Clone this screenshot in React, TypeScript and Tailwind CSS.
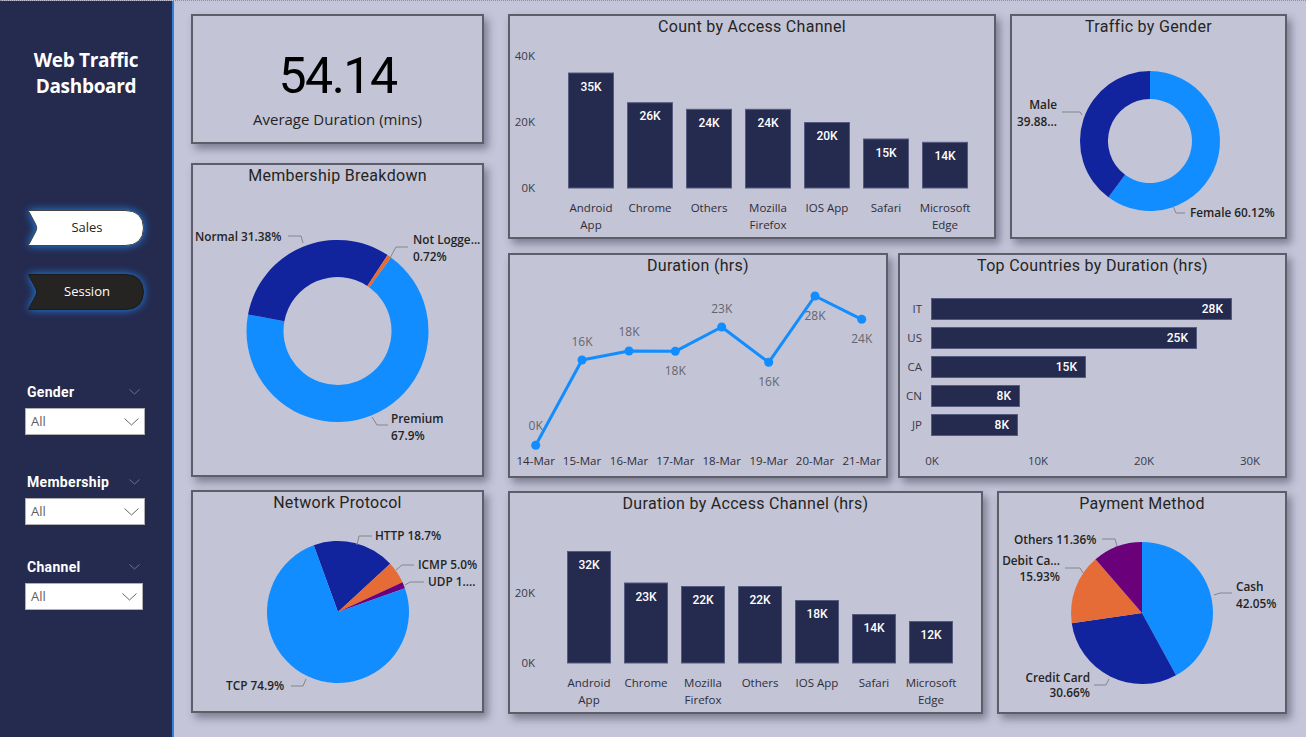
import React from "react";

type Part = { v: number; c: string };

const LIGHT = "#118dff";
const DARK = "#12239e";
const ORANGE = "#e66c37";
const PURPLE = "#6b007b";
const NAVY = "#252a4f";

const pt = (cx: number, cy: number, r: number, a: number) => [
  cx + r * Math.sin((a * Math.PI) / 180),
  cy - r * Math.cos((a * Math.PI) / 180),
];

function slicePath(cx: number, cy: number, r: number, ri: number, a0: number, a1: number) {
  const large = a1 - a0 > 180 ? 1 : 0;
  const [x0, y0] = pt(cx, cy, r, a0);
  const [x1, y1] = pt(cx, cy, r, a1);
  if (ri === 0) return `M${cx},${cy} L${x0},${y0} A${r},${r} 0 ${large} 1 ${x1},${y1} Z`;
  const [x2, y2] = pt(cx, cy, ri, a1);
  const [x3, y3] = pt(cx, cy, ri, a0);
  return `M${x0},${y0} A${r},${r} 0 ${large} 1 ${x1},${y1} L${x2},${y2} A${ri},${ri} 0 ${large} 0 ${x3},${y3} Z`;
}

function Pie({ cx, cy, r, ri = 0, start, parts }: { cx: number; cy: number; r: number; ri?: number; start: number; parts: Part[] }) {
  let a = start;
  return (
    <g>
      {parts.map((p, i) => {
        const a0 = a;
        a += p.v * 3.6;
        return <path key={i} d={slicePath(cx, cy, r, ri, a0, a)} fill={p.c} />;
      })}
    </g>
  );
}

// leader line + label for pies
function Leader({ pts }: { pts: string }) {
  return <polyline points={pts} fill="none" stroke="#85858f" strokeWidth={1} />;
}

function Lbl({ x, y, children, anchor = "start" }: { x: number; y: number; children: React.ReactNode; anchor?: "start" | "end" | "middle" }) {
  return (
    <text x={x} y={y} textAnchor={anchor} fontFamily="Open Sans, sans-serif" fontSize={11.8} fontWeight={600} fill="#252423">
      {children}
    </text>
  );
}

function AxisText({ x, y, children, anchor = "middle", fill = "#2e2e3a" }: { x: number; y: number; children: React.ReactNode; anchor?: "start" | "end" | "middle"; fill?: string }) {
  return (
    <text x={x} y={y} textAnchor={anchor} fontFamily="Open Sans, sans-serif" fontSize={11.5} fill={fill}>
      {children}
    </text>
  );
}

function Card({ className, w, h, title, children }: { className: string; w: number; h: number; title: string; children: React.ReactNode }) {
  return (
    <div className={`${className} shrink-0 flex flex-col border-2 border-[#5e5e6a] bg-[#c3c4d6] shadow-[4px_5px_8px_rgba(40,40,60,0.45)]`}>
      <div className="h-[21px] pt-[1px] text-center text-[16px] leading-[20px] text-[#252423] font-['Roboto',sans-serif] tracking-[0.3px]">
        {title}
      </div>
      <svg width={w - 4} height={h - 25} viewBox={`2 23 ${w - 4} ${h - 25}`} className="block overflow-visible">
        {children}
      </svg>
    </div>
  );
}

function ColumnChart({ x0, step, bw, base, scale, values, names, ticks, l1, l2 }: {
  x0: number; step: number; bw: number; base: number; scale: number; values: number[]; names: string[][]; ticks: number[]; l1: number; l2: number;
}) {
  return (
    <g>
      {ticks.map((t) => (
        <AxisText key={t} x={27} y={base - t * scale + 4} anchor="end" fill="#3a3a48">
          {t}K
        </AxisText>
      ))}
      {values.map((v, i) => {
        const x = x0 + i * step;
        const top = base - v * scale;
        return (
          <g key={i}>
            <rect x={x + 0.5} y={top + 0.5} width={bw - 1} height={v * scale - 0.5} fill={NAVY} stroke="#555a80" strokeWidth={1} />
            <text x={x + bw / 2} y={top + 18} textAnchor="middle" fontFamily="Roboto, sans-serif" fontSize={12} fontWeight={500} fill="#ffffff">
              {v}K
            </text>
            <AxisText x={x + bw / 2} y={l1}>{names[i][0]}</AxisText>
            {names[i][1] && <AxisText x={x + bw / 2} y={l2}>{names[i][1]}</AxisText>}
          </g>
        );
      })}
    </g>
  );
}

function SideButton({ label, dark }: { label: string; dark?: boolean }) {
  return (
    <div className="relative ml-[27px] h-[38px] w-[118px]">
      <svg width={118} height={38} viewBox="0 0 118 38" className="block overflow-visible drop-shadow-[0_0_4px_rgba(30,144,255,0.9)]">
        <path
          d="M2,1.5 H98 Q116,1.5 116.5,19 Q116,36.5 98,36.5 H2 Q1,36 3,33.5 L9,22 Q10.5,19 9,16 L3,4.5 Q1,2 2,1.5 Z"
          fill={dark ? "#252423" : "#ffffff"}
          stroke={dark ? "#1a1a1a" : "#444444"}
          strokeWidth={1}
        />
      </svg>
      <span
        className={`absolute inset-0 flex items-center justify-center pl-[2px] text-[13px] font-['Open_Sans',sans-serif] ${dark ? "text-white" : "text-[#252423]"}`}
      >
        {label}
      </span>
    </div>
  );
}

function Slicer({ label, mt, boxW }: { label: string; mt: string; boxW: string }) {
  return (
    <div className={`${mt} flex flex-col`}>
      <div className="flex h-[18px] items-center justify-between pl-[27px] pr-[32px]">
        <span className="text-[14px] font-bold text-white font-['Roboto',sans-serif] tracking-[0.3px]">{label}</span>
        <svg width={11} height={6} viewBox="0 0 11 6">
          <polyline points="0.5,0.5 5.5,5 10.5,0.5" fill="none" stroke="#6e7190" strokeWidth={1} />
        </svg>
      </div>
      <div className={`${boxW} ml-[25px] mt-[7px] flex h-[27px] items-center justify-between border border-[#b0b0b0] bg-white pl-[5px] pr-[5px]`}>
        <span className="text-[13px] text-[#605e5c] font-['Open_Sans',sans-serif]">All</span>
        <svg width={15} height={8} viewBox="0 0 15 8">
          <polyline points="0.5,0.5 7.5,7 14.5,0.5" fill="none" stroke="#666" strokeWidth={1} />
        </svg>
      </div>
    </div>
  );
}

const channelNames = [["Android", "App"], ["Chrome"], ["Others"], ["Mozilla", "Firefox"], ["IOS App"], ["Safari"], ["Microsoft", "Edge"]];
const durationNames = [["Android", "App"], ["Chrome"], ["Mozilla", "Firefox"], ["Others"], ["IOS App"], ["Safari"], ["Microsoft", "Edge"]];

const linePts = [
  { x: 27.7, y: 192.3, d: "14-Mar", l: "0K", ly: 173 },
  { x: 74, y: 107, d: "15-Mar", l: "16K", ly: 89 },
  { x: 121, y: 98, d: "16-Mar", l: "18K", ly: 79 },
  { x: 167.3, y: 98.3, d: "17-Mar", l: "18K", ly: 118 },
  { x: 213.7, y: 74, d: "18-Mar", l: "23K", ly: 56 },
  { x: 260.7, y: 109.3, d: "19-Mar", l: "16K", ly: 129 },
  { x: 307, y: 43, d: "20-Mar", l: "28K", ly: 63 },
  { x: 353.7, y: 66.3, d: "21-Mar", l: "24K", ly: 86 },
];

const countries = [
  { c: "IT", w: 301, v: "28K" },
  { c: "US", w: 266, v: "25K" },
  { c: "CA", w: 155, v: "15K" },
  { c: "CN", w: 89, v: "8K" },
  { c: "JP", w: 87, v: "8K" },
];

export default function App() {
  return (
    <div className="flex h-[737px] w-[1306px] overflow-hidden border-t border-dotted border-[#8e8e9c] bg-[#c4c5d8]">
      {/* Sidebar */}
      <aside className="flex w-[174px] shrink-0 flex-col border-r-2 border-[#2f80d8] bg-[#252a4f]">
        <h1 className="pt-[46px] text-center text-[19px] font-bold leading-[26px] text-white font-['Open_Sans',sans-serif] tracking-[-0.3px]">
          Web Traffic
          <br />
          Dashboard
        </h1>
        <div className="mt-[110px] flex flex-col gap-[26px]">
          <SideButton label="Sales" />
          <SideButton label="Session" dark />
        </div>
        <Slicer label="Gender" mt="mt-[72px]" boxW="w-[120px]" />
        <Slicer label="Membership" mt="mt-[38px]" boxW="w-[120px]" />
        <Slicer label="Channel" mt="mt-[33px]" boxW="w-[118px]" />
      </aside>

      {/* Canvas */}
      <main className="flex gap-[24px] pl-[17px] pt-[12px]">
        <div className="flex w-[293px] flex-col">
          <div className="mt-[1px] flex h-[130px] w-[293px] flex-col items-center border-2 border-[#5e5e6a] bg-[#c3c4d6] shadow-[4px_5px_8px_rgba(40,40,60,0.45)]">
            <div className="mt-[33px] text-[50px] leading-[54px] text-black font-['Roboto',sans-serif] tracking-[-1.5px]">54.14</div>
            <div className="mt-[5px] text-[15px] text-[#252423] font-['Open_Sans',sans-serif]">Average Duration (mins)</div>
          </div>

          <div className="mt-[19px]">
            <Card className="w-[293px] h-[314px]" w={293} h={314} title="Membership Breakdown">
              <Pie cx={146.5} cy={168} r={91} ri={54} start={36} parts={[{ v: 67.9, c: LIGHT }, { v: 31.38, c: DARK }, { v: 0.72, c: ORANGE }]} />
              <Leader pts="97,73 110,73 112,80" />
              <Lbl x={4} y={78}>Normal 31.38%</Lbl>
              <Leader pts="199,95 205,84 217,84" />
              <Lbl x={222} y={81}>Not Logge...</Lbl>
              <Lbl x={222} y={98}>0.72%</Lbl>
              <Leader pts="181,254 186,262 197,262" />
              <Lbl x={200} y={260}>Premium</Lbl>
              <Lbl x={200} y={277}>67.9%</Lbl>
            </Card>
          </div>

          <div className="mt-[13px]">
            <Card className="w-[293px] h-[223px]" w={293} h={223} title="Network Protocol">
              <Pie cx={147} cy={122} r={71} start={340} parts={[{ v: 18.7, c: DARK }, { v: 5.0, c: ORANGE }, { v: 1.4, c: PURPLE }, { v: 74.9, c: LIGHT }]} />
              <Leader pts="166,55 168,46 181,46" />
              <Lbl x={184} y={50}>HTTP 18.7%</Lbl>
              <Leader pts="205,80 211,75 223,75" />
              <Lbl x={227} y={79}>ICMP 5.0%</Lbl>
              <Leader pts="214,95 219,92 233,92" />
              <Lbl x={237} y={96}>UDP 1....</Lbl>
              <Leader pts="100,196 112,196 115,189" />
              <Lbl x={35} y={200}>TCP 74.9%</Lbl>
            </Card>
          </div>
        </div>

        <div className="flex flex-col">
          <div className="mt-[1px] flex gap-[14px]">
            <Card className="w-[488px] h-[225px]" w={488} h={225} title="Count by Access Channel">
              <ColumnChart x0={60} step={59} bw={46} base={174} scale={3.3} values={[35, 26, 24, 24, 20, 15, 14]} names={channelNames} ticks={[40, 20, 0]} l1={198} l2={215} />
            </Card>
            <Card className="w-[277px] h-[225px]" w={277} h={225} title="Traffic by Gender">
              <Pie cx={140} cy={127} r={70} ri={42} start={0} parts={[{ v: 60.12, c: LIGHT }, { v: 39.88, c: DARK }]} />
              <Leader pts="52,98 70,98 72,101" />
              <Lbl x={47} y={95} anchor="end">Male</Lbl>
              <Lbl x={47} y={112} anchor="end">39.88...</Lbl>
              <Leader pts="163,192 166,199 175,199" />
              <Lbl x={180} y={203}>Female 60.12%</Lbl>
            </Card>
          </div>

          <div className="mt-[14px] flex gap-[10px]">
            <Card className="w-[380px] h-[225px]" w={380} h={225} title="Duration (hrs)">
              <polyline points={linePts.map((p) => `${p.x},${p.y}`).join(" ")} fill="none" stroke={LIGHT} strokeWidth={3} strokeLinejoin="round" />
              {linePts.map((p) => (
                <g key={p.d}>
                  <circle cx={p.x} cy={p.y} r={4.5} fill={LIGHT} />
                  <text x={p.x} y={p.ly + 4} textAnchor="middle" fontFamily="Open Sans, sans-serif" fontSize={12} fill="#66656c">
                    {p.l}
                  </text>
                  <AxisText x={p.x} y={212}>{p.d}</AxisText>
                </g>
              ))}
            </Card>
            <Card className="w-[389px] h-[225px]" w={389} h={225} title="Top Countries by Duration (hrs)">
              {countries.map((r, i) => {
                const y = 45 + i * 29;
                return (
                  <g key={r.c}>
                    <AxisText x={24} y={y + 15} anchor="end" fill="#3a3a48">{r.c}</AxisText>
                    <rect x={33.5} y={y + 0.5} width={r.w - 1} height={21} fill={NAVY} stroke="#555a80" strokeWidth={1} />
                    <text x={33 + r.w - 9} y={y + 15} textAnchor="end" fontFamily="Roboto, sans-serif" fontSize={12} fontWeight={500} fill="#ffffff">
                      {r.v}
                    </text>
                  </g>
                );
              })}
              {[0, 10, 20, 30].map((t, i) => (
                <AxisText key={t} x={34 + i * 106} y={212} fill="#3a3a48">{t}K</AxisText>
              ))}
            </Card>
          </div>

          <div className="mt-[13px] flex gap-[14px]">
            <Card className="w-[475px] h-[223px]" w={475} h={223} title="Duration by Access Channel (hrs)">
              <ColumnChart x0={59} step={57} bw={44} base={172} scale={3.5} values={[32, 23, 22, 22, 18, 14, 12]} names={durationNames} ticks={[20, 0]} l1={196} l2={213} />
            </Card>
            <Card className="w-[290px] h-[223px]" w={290} h={223} title="Payment Method">
              <Pie cx={145} cy={122} r={71} start={0} parts={[{ v: 42.05, c: LIGHT }, { v: 30.66, c: DARK }, { v: 15.93, c: ORANGE }, { v: 11.36, c: PURPLE }]} />
              <Leader pts="105,48 118,48 120,55" />
              <Lbl x={17} y={53}>Others 11.36%</Lbl>
              <Leader pts="68,77 83,77 86,82" />
              <Lbl x={63} y={74} anchor="end">Debit Ca...</Lbl>
              <Lbl x={63} y={90} anchor="end">15.93%</Lbl>
              <Leader pts="217,104 223,102 235,102" />
              <Lbl x={239} y={100}>Cash</Lbl>
              <Lbl x={239} y={117}>42.05%</Lbl>
              <Leader pts="97,194 109,194 112,188" />
              <Lbl x={93} y={191} anchor="end">Credit Card</Lbl>
              <Lbl x={93} y={206} anchor="end">30.66%</Lbl>
            </Card>
          </div>
        </div>
      </main>
    </div>
  );
}
